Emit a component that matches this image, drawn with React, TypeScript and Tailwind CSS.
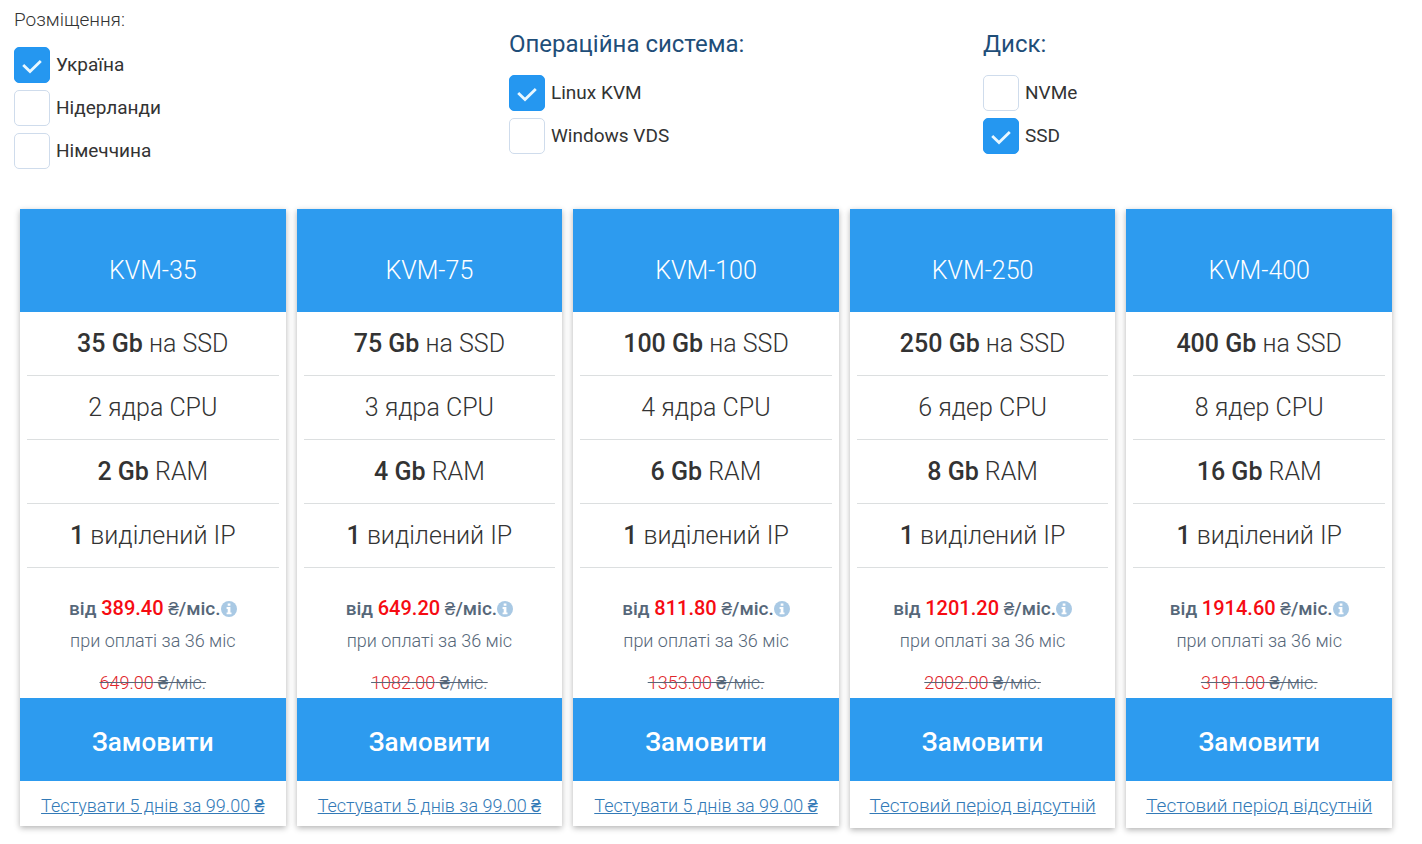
import clsx from "clsx";

type Plan = {
  name: string;
  disk: string;
  cpu: string;
  ram: string;
  price: string;
  oldPrice: string;
  trial: boolean;
};

const plans: Plan[] = [
  { name: "KVM-35", disk: "35 Gb", cpu: "2 ядра CPU", ram: "2 Gb", price: "389.40", oldPrice: "649.00", trial: true },
  { name: "KVM-75", disk: "75 Gb", cpu: "3 ядра CPU", ram: "4 Gb", price: "649.20", oldPrice: "1082.00", trial: true },
  { name: "KVM-100", disk: "100 Gb", cpu: "4 ядра CPU", ram: "6 Gb", price: "811.80", oldPrice: "1353.00", trial: true },
  { name: "KVM-250", disk: "250 Gb", cpu: "6 ядер CPU", ram: "8 Gb", price: "1201.20", oldPrice: "2002.00", trial: false },
  { name: "KVM-400", disk: "400 Gb", cpu: "8 ядер CPU", ram: "16 Gb", price: "1914.60", oldPrice: "3191.00", trial: false },
];

function Option({ label, checked = false }: { label: string; checked?: boolean }) {
  return (
    <label className="flex w-fit cursor-pointer items-center gap-[6px] text-[19px] leading-6 text-[#333]">
      <span className="grid size-9 shrink-0">
        <input
          type="checkbox"
          defaultChecked={checked}
          className="peer col-start-1 row-start-1 size-9 cursor-pointer appearance-none rounded-[5px] border border-[#cfdcec] bg-white checked:border-[#2196f3] checked:bg-[#2597f0]"
        />
        <svg viewBox="0 0 36 36" className="pointer-events-none col-start-1 row-start-1 hidden size-9 peer-checked:block" fill="none" stroke="#e9f8ff" strokeWidth="2.8">
          <path d="M9.2 18l6.8 6.6 10.8-10.6" />
        </svg>
      </span>
      {label}
    </label>
  );
}

function InfoIcon() {
  return (
    <svg viewBox="0 0 16 16" className="size-4 shrink-0">
      <circle cx="8" cy="8" r="8" fill="#a9c9e4" />
      <path fill="#fff" d="M6.7 2.4h2.7v2.3H6.7zM5.6 6.1h3.8v5.3h1.1v1.8H5.6v-1.8h1.1V7.9H5.6z" />
    </svg>
  );
}

function Row({ bold, text }: { bold?: string; text: string }) {
  return (
    <li className="mx-[7px] flex h-16 items-center justify-center border-b border-[#dcdfe0]">
      <p>
        {bold && <b className="font-medium">{bold}</b>} {text}
      </p>
    </li>
  );
}

function PlanCard({ plan }: { plan: Plan }) {
  return (
    <article className="bg-white text-center shadow-[0_2px_6px_rgba(0,0,0,0.3)]">
      <h3 className="bg-[#2d9bef] pt-[46px] pb-[25px] text-[25px] leading-8 font-light text-white">{plan.name}</h3>
      <ul className="text-[25px] leading-8 font-light text-[#333]">
        <Row bold={plan.disk} text="на SSD" />
        <Row text={plan.cpu} />
        <Row bold={plan.ram} text="RAM" />
        <Row bold="1" text="виділений IP" />
      </ul>
      <div className="pt-[25px] text-[#566779]">
        <p className="flex items-center justify-center text-[19px] leading-8 font-medium">
          <span>
            від <span className="text-[20px] leading-none text-[#f60b12]">{plan.price}</span> ₴/міс.
          </span>
          <InfoIcon />
        </p>
        <p className="text-[18px] leading-8 font-light">при оплаті за 36 міс</p>
        <p className="pt-[11px] text-[18px] leading-[30px] font-light">
          <s>
            <span className="text-[#e0262b]">{plan.oldPrice}</span> ₴/міс.
          </s>
        </p>
      </div>
      <button type="button" className="block w-full cursor-pointer bg-[#2d9bef] pt-7 pb-[23px] text-[26px] leading-8 font-medium text-white">
        Замовити
      </button>
      <p className={clsx("pt-3 leading-[25px] font-light text-[#337ab7]", plan.trial ? "pb-2 text-[18px]" : "pb-[10px] text-[19px]")}>
        <a href="#" className="underline">
          {plan.trial ? "Тестувати 5 днів за 99.00 ₴" : "Тестовий період відсутній"}
        </a>
      </p>
    </article>
  );
}

export default function App() {
  return (
    <main className="min-h-screen bg-white pb-4 font-['Roboto','Liberation_Sans',sans-serif]">
      <form className="grid grid-cols-3">
        <fieldset className="pt-2 pl-[14px]">
          <legend className="contents">
            <span className="block text-[19px] leading-6 font-light text-[#333]">Розміщення:</span>
          </legend>
          <div className="flex flex-col gap-[7px] pt-[15px]">
            <Option label="Україна" checked />
            <Option label="Нідерланди" />
            <Option label="Німеччина" />
          </div>
        </fieldset>
        <fieldset className="pt-7 pl-[35px]">
          <legend className="contents">
            <span className="block text-[24px] leading-8 text-[#1f4e79]">Операційна система:</span>
          </legend>
          <div className="flex flex-col gap-[7px] pt-[15px]">
            <Option label="Linux KVM" checked />
            <Option label="Windows VDS" />
          </div>
        </fieldset>
        <fieldset className="pt-7 pl-[35px]">
          <legend className="contents">
            <span className="block text-[24px] leading-8 text-[#1f4e79]">Диск:</span>
          </legend>
          <div className="flex flex-col gap-[7px] pt-[15px]">
            <Option label="NVMe" />
            <Option label="SSD" checked />
          </div>
        </fieldset>
      </form>
      <section className="grid grid-cols-5 items-start gap-[11px] pt-10 pr-[30px] pl-5">
        {plans.map((plan) => (
          <PlanCard key={plan.name} plan={plan} />
        ))}
      </section>
    </main>
  );
}
